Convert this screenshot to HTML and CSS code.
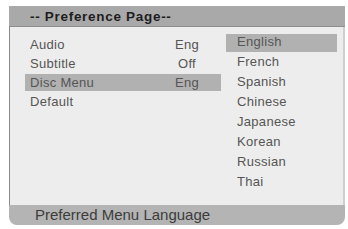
FILE: index.html
```html
<!DOCTYPE html>
<html lang="en">
<head>
    <meta charset="UTF-8">
    <title>Preference Page</title>
    <link rel="stylesheet" href="styles.css">
</head>
<body>
    <div class="osd">
        <div class="osd-title">-- Preference Page--</div>
        <div class="osd-body">
            <div class="settings">
                <div class="row"><span class="label">Audio</span><span class="value">Eng</span></div>
                <div class="row"><span class="label">Subtitle</span><span class="value">Off</span></div>
                <div class="row is-active"><span class="label">Disc Menu</span><span class="value">Eng</span></div>
                <div class="row"><span class="label">Default</span><span class="value"></span></div>
            </div>
            <div class="options">
                <div class="option is-active">English</div>
                <div class="option">French</div>
                <div class="option">Spanish</div>
                <div class="option">Chinese</div>
                <div class="option">Japanese</div>
                <div class="option">Korean</div>
                <div class="option">Russian</div>
                <div class="option">Thai</div>
            </div>
        </div>
        <div class="osd-status">Preferred Menu Language</div>
    </div>
</body>
</html>
```

FILE: styles.css
```css
body {
    margin: 0;
    background: #ffffff;
    font-family: "Liberation Sans", Arial, sans-serif;
}

.osd {
    width: 336px;
    margin: 6px 0 0 9px;
    display: flex;
    flex-direction: column;
}

.osd-title {
    height: 20px;
    line-height: 22px;
    background: #a9a9a9;
    border-bottom: 1px solid #8e8e8e;
    padding-left: 21px;
    font-size: 13.5px;
    font-weight: bold;
    color: #1e1e1e;
    letter-spacing: 0.7px;
}

.osd-body {
    height: 178px;
    background: #ededed;
    border-left: 1px solid #8a8a8a;
    border-right: 2px solid #cfcfcf;
    display: flex;
    padding-left: 15px;
    gap: 5px;
}

.settings {
    width: 196px;
    padding-top: 9px;
}

.row {
    display: grid;
    grid-template-columns: 137px 40px;
    height: 17px;
    line-height: 17px;
    margin-bottom: 2px;
    padding-left: 5px;
    font-size: 13px;
    color: #555555;
    letter-spacing: 0.3px;
}

.row .value {
    text-align: center;
}

.row.is-active,
.option.is-active {
    background: #b1b1b1;
}

.options {
    width: 111px;
    padding-top: 7px;
}

.option {
    height: 18px;
    line-height: 15px;
    margin-bottom: 2px;
    padding-left: 11px;
    font-size: 13px;
    color: #555555;
    letter-spacing: 0.3px;
}

.osd-status {
    height: 20px;
    line-height: 20px;
    background: #b4b4b4;
    border-radius: 0 0 8px 8px;
    padding-left: 26px;
    font-size: 15px;
    color: #3c3c3c;
}
```
